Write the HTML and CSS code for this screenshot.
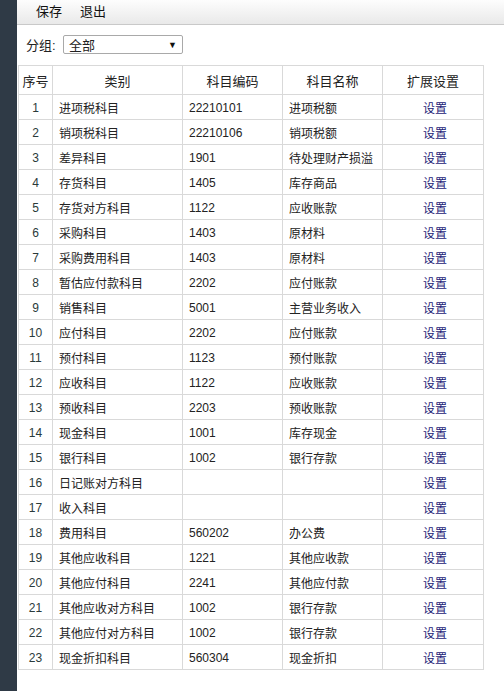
FILE: index.html
```html
<!DOCTYPE html>
<html lang="zh-CN">
<head>
<meta charset="utf-8">
<title>科目设置</title>
<link rel="stylesheet" href="styles.css">
</head>
<body>
<div class="app">
  <aside class="sidebar"></aside>
  <main class="main">
    <div class="toolbar">
      <span class="tool-btn">保存</span>
      <span class="tool-btn">退出</span>
    </div>
    <div class="filter">
      <span class="filter-label">分组:</span>
      <div class="select"><span>全部</span><span class="arrow">▼</span></div>
    </div>
    <table class="grid">
      <colgroup>
        <col class="c-no"><col class="c-type"><col class="c-code"><col class="c-name"><col class="c-ext">
      </colgroup>
      <thead>
        <tr><th>序号</th><th>类别</th><th>科目编码</th><th>科目名称</th><th>扩展设置</th></tr>
      </thead>
      <tbody>
        <tr><td class="no">1</td><td>进项税科目</td><td>22210101</td><td>进项税额</td><td class="ext"><a>设置</a></td></tr>
        <tr><td class="no">2</td><td>销项税科目</td><td>22210106</td><td>销项税额</td><td class="ext"><a>设置</a></td></tr>
        <tr><td class="no">3</td><td>差异科目</td><td>1901</td><td>待处理财产损溢</td><td class="ext"><a>设置</a></td></tr>
        <tr><td class="no">4</td><td>存货科目</td><td>1405</td><td>库存商品</td><td class="ext"><a>设置</a></td></tr>
        <tr><td class="no">5</td><td>存货对方科目</td><td>1122</td><td>应收账款</td><td class="ext"><a>设置</a></td></tr>
        <tr><td class="no">6</td><td>采购科目</td><td>1403</td><td>原材料</td><td class="ext"><a>设置</a></td></tr>
        <tr><td class="no">7</td><td>采购费用科目</td><td>1403</td><td>原材料</td><td class="ext"><a>设置</a></td></tr>
        <tr><td class="no">8</td><td>暂估应付款科目</td><td>2202</td><td>应付账款</td><td class="ext"><a>设置</a></td></tr>
        <tr><td class="no">9</td><td>销售科目</td><td>5001</td><td>主营业务收入</td><td class="ext"><a>设置</a></td></tr>
        <tr><td class="no">10</td><td>应付科目</td><td>2202</td><td>应付账款</td><td class="ext"><a>设置</a></td></tr>
        <tr><td class="no">11</td><td>预付科目</td><td>1123</td><td>预付账款</td><td class="ext"><a>设置</a></td></tr>
        <tr><td class="no">12</td><td>应收科目</td><td>1122</td><td>应收账款</td><td class="ext"><a>设置</a></td></tr>
        <tr><td class="no">13</td><td>预收科目</td><td>2203</td><td>预收账款</td><td class="ext"><a>设置</a></td></tr>
        <tr><td class="no">14</td><td>现金科目</td><td>1001</td><td>库存现金</td><td class="ext"><a>设置</a></td></tr>
        <tr><td class="no">15</td><td>银行科目</td><td>1002</td><td>银行存款</td><td class="ext"><a>设置</a></td></tr>
        <tr><td class="no">16</td><td>日记账对方科目</td><td></td><td></td><td class="ext"><a>设置</a></td></tr>
        <tr><td class="no">17</td><td>收入科目</td><td></td><td></td><td class="ext"><a>设置</a></td></tr>
        <tr><td class="no">18</td><td>费用科目</td><td>560202</td><td>办公费</td><td class="ext"><a>设置</a></td></tr>
        <tr><td class="no">19</td><td>其他应收科目</td><td>1221</td><td>其他应收款</td><td class="ext"><a>设置</a></td></tr>
        <tr><td class="no">20</td><td>其他应付科目</td><td>2241</td><td>其他应付款</td><td class="ext"><a>设置</a></td></tr>
        <tr><td class="no">21</td><td>其他应收对方科目</td><td>1002</td><td>银行存款</td><td class="ext"><a>设置</a></td></tr>
        <tr><td class="no">22</td><td>其他应付对方科目</td><td>1002</td><td>银行存款</td><td class="ext"><a>设置</a></td></tr>
        <tr><td class="no">23</td><td>现金折扣科目</td><td>560304</td><td>现金折扣</td><td class="ext"><a>设置</a></td></tr>
      </tbody>
    </table>
  </main>
</div>
</body>
</html>
```
FILE: styles.css
```css
html, body {
  margin: 0;
  padding: 0;
  background: #ffffff;
}
body {
  font-family: "Liberation Sans", "Noto Sans CJK SC", sans-serif;
  font-size: 12px;
  color: #222222;
}
.app {
  display: flex;
  min-height: 691px;
}
.sidebar {
  width: 17px;
  flex: none;
  background: #2f3a46;
}
.main {
  flex: 1;
  display: flex;
  flex-direction: column;
  min-width: 0;
}
.toolbar {
  box-sizing: border-box;
  height: 25px;
  display: flex;
  align-items: center;
  gap: 18px;
  padding: 0 0 3px 19px;
  background: linear-gradient(#fdfdfd, #e9e9e9);
  border-bottom: 1px solid #c9c9c9;
  font-size: 13px;
  color: #111;
}
.tool-btn {
  cursor: pointer;
}
.filter {
  display: flex;
  align-items: center;
  padding: 10px 0 0 9px;
  font-size: 13px;
}
.filter-label {
  width: 37px;
  color: #222;
}
.select {
  box-sizing: border-box;
  width: 120px;
  height: 19px;
  border: 1px solid #a9a9a9;
  border-radius: 2px;
  background: #fff;
  display: flex;
  align-items: center;
  justify-content: space-between;
  padding: 0 5px 0 5px;
  font-size: 13px;
}
.arrow {
  font-size: 9px;
  color: #111;
}
.grid {
  margin: 11px 0 0 1px;
  border-collapse: collapse;
  table-layout: fixed;
  width: 465px;
}
.c-no { width: 34px; }
.c-type { width: 130px; }
.c-code { width: 100px; }
.c-name { width: 100px; }
.c-ext { width: 101px; }
.grid th, .grid td {
  border: 1px solid #d9d9d9;
  white-space: nowrap;
  overflow: hidden;
}
.grid th {
  height: 28px;
  font-weight: normal;
  text-align: center;
  font-size: 13px;
  color: #222;
  padding: 0;
}
.grid td {
  height: 23px;
  padding: 1px 0 0 6px;
  font-size: 12px;
  color: #222;
}
.grid td.no {
  text-align: center;
  padding: 1px 0 0 0;
  color: #2a3a3a;
}
.grid td.ext {
  text-align: center;
  padding: 1px 0 0 4px;
}
.grid td.ext a {
  color: #1c2277;
  cursor: pointer;
}
```
